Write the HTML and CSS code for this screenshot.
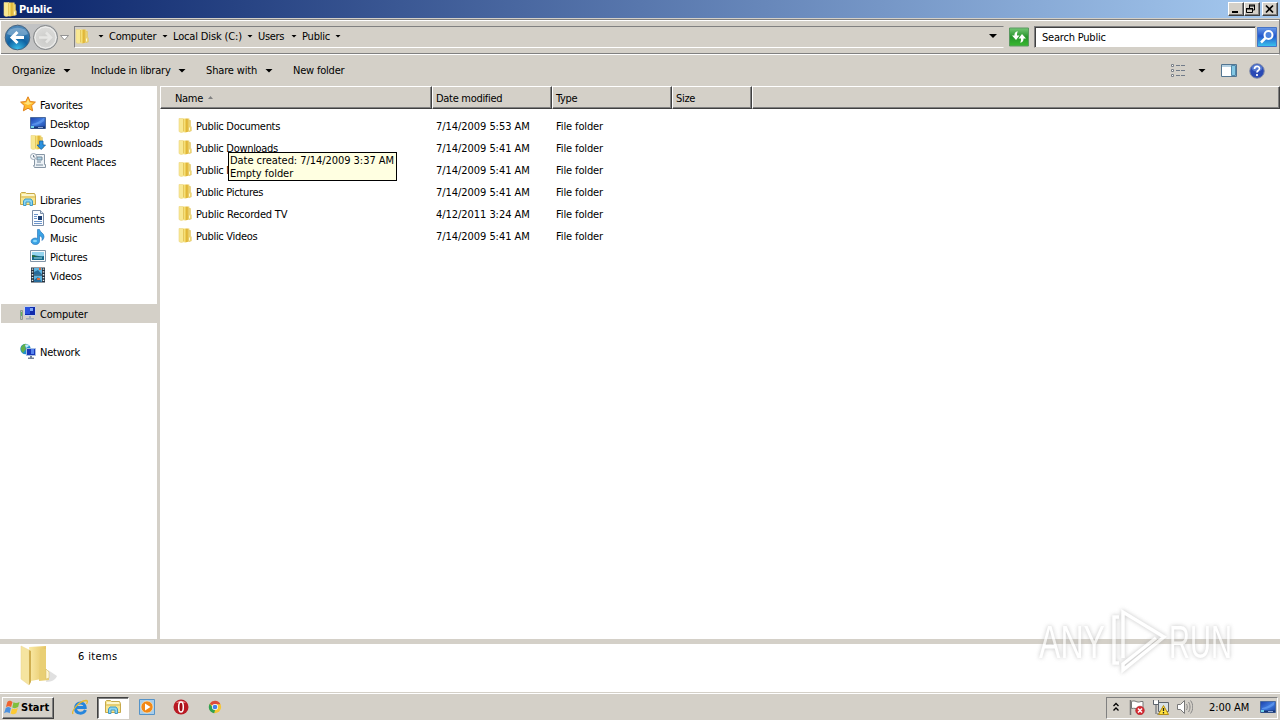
FILE: index.html
```html
<!DOCTYPE html>
<html lang="en">
<head>
<meta charset="utf-8">
<title>Public</title>
<link rel="stylesheet" href="styles.css">
</head>
<body>
<svg class="defs" aria-hidden="true">
  <defs>
    <linearGradient id="gold" x2="1"><stop offset="0" stop-color="#fff6b0"/><stop offset=".35" stop-color="#f0d35c"/><stop offset=".6" stop-color="#dcae2e"/><stop offset="1" stop-color="#f6e48a"/></linearGradient>
    <linearGradient id="goldBig" x2="1"><stop offset="0" stop-color="#faeaa6"/><stop offset="1" stop-color="#e5c565"/></linearGradient>
    <linearGradient id="blue" x2="1" y2="1"><stop offset="0" stop-color="#1c3fa8"/><stop offset=".5" stop-color="#3f7be0"/><stop offset="1" stop-color="#173f9c"/></linearGradient>
    <radialGradient id="back" cx=".5" cy="1" r=".9"><stop offset="0" stop-color="#3cc4f0"/><stop offset=".5" stop-color="#0f62a2"/><stop offset="1" stop-color="#4a86b8"/></radialGradient>
    <radialGradient id="fwd" cx=".5" cy=".6" r=".6"><stop offset="0" stop-color="#cacac8"/><stop offset="1" stop-color="#dededc"/></radialGradient>
    <linearGradient id="green" y2="1" x2="0"><stop offset="0" stop-color="#76c776"/><stop offset=".5" stop-color="#25952a"/><stop offset="1" stop-color="#38b92f"/></linearGradient>
    <linearGradient id="find" y2="1" x2="0"><stop offset="0" stop-color="#6b9be8"/><stop offset=".45" stop-color="#2458cc"/><stop offset="1" stop-color="#3ac5ee"/></linearGradient>
    <symbol id="folder" viewBox="0 0 16 16"><path d="M2 1.500h4.500v13.500L4 15.500l-2-1z" fill="#f8e893" stroke="#ecd581" stroke-width=".6"/><path d="M6 1.500h6.500v13L8 15.500l-2-.5z" fill="url(#gold)"/><path d="M12 3.500h1.500V9l.8 1v4l-2.300.5z" fill="#f0d978" stroke="#dcbc58" stroke-width=".5"/><path d="M6.500 2v12.500" stroke="#dfbe4c" stroke-width=".8"/><path d="M12.500 10.500v3" stroke="#fff8d0"/></symbol>
    <symbol id="star" viewBox="0 0 16 16"><path d="m8 .8 2.200 4.700 5.200.6-3.800 3.500 1 5.200L8 12.200l-4.600 2.600 1-5.200L.6 6.100l5.200-.6z" fill="#ffb92a" stroke="#e0811c"/><path d="m8 3 1.500 3.500 3.500.5-5 2-4.500-2 3-.5z" fill="#ffe27c"/></symbol>
    <symbol id="desktop" viewBox="0 0 16 16"><path d="M.5 2.500h15v11H.5z" fill="url(#blue)" stroke="#4b6a9d"/><path d="M1 11.500h14v2H1z" fill="#183571"/><path d="M1 12h3" stroke="#6fd0e8" stroke-width="2"/><path d="M8 12.500h5" stroke="#8ea7d5"/><path d="M2 9c5-1 8-3 12-6v3c-4 3-7 4-12 4z" fill="#6ba4f4" opacity=".6"/></symbol>
    <symbol id="downloads" viewBox="0 0 16 16"><use href="#folder" x="-1"/><path d="M9.500 7h3.500v4h2.500L11.200 15.500 7 11h2.500z" fill="#2b91df" stroke="#1765a8" stroke-width=".8"/></symbol>
    <symbol id="recent" viewBox="0 0 16 16"><path d="M4.500 1.500h10v10h1v3h-11l-1-2h1z" fill="#edf2f6" stroke="#8796a5"/><path d="M6 12h7M7 4h5v3H7zM7 9h4" stroke="#75899c" fill="#acd2e4"/><circle cx="3.500" cy="3.500" r="3" fill="#f5f7fa" stroke="#9aa7b5"/><path d="M3.500 2v2h1.500" stroke="#526577" fill="none" stroke-width=".8"/></symbol>
    <symbol id="libraries" viewBox="0 0 16 16"><path d="M.5 13.500v-11l1-1h4l1 1h8l1 2v9z" fill="#f7e58f" stroke="#c7a94b"/><path d="M2 4h12" stroke="#fffbe0" stroke-width="1.500"/><path d="M1 6h14" stroke="#d8b957"/><path d="M3.500 14.500V10l1.500-2h6l1.500 2v4.500h-2.500V11H6v3.500z" fill="#8bd5f3" stroke="#3e9ac6"/></symbol>
    <symbol id="document" viewBox="0 0 16 16"><path d="M2.500.5h8l3 3v12h-11z" fill="#fbfdff" stroke="#7b8ea8"/><path d="M10.500.5v3h3" fill="#d7e2ef" stroke="#7b8ea8"/><path d="M4 4.500h4M4 6.500h3M4 8.500h3M4 11.500h8M4 13.500h8" stroke="#6b94ca"/><path d="M8 6h4v4H8z" fill="#1d4175"/></symbol>
    <symbol id="music" viewBox="0 0 16 16"><path d="M7.500.5h2c.5 3 4.500 3.500 4.500 7 0 2-1 3-2 4 .5-3-.5-4-2.500-5V12a4.200 3.300 0 1 1-2-2.500z" fill="#3aa2e4" stroke="#1d6cb5" stroke-width=".6"/><ellipse cx="5" cy="12" rx="2" ry="1.300" fill="#89d7fa"/></symbol>
    <symbol id="picture" viewBox="0 0 16 16"><path d="M.5 2.500h15v11H.5z" fill="#f8fafb" stroke="#8295a8"/><path d="M2 4h12v8H2z" fill="#95d4ee"/><path d="M2 8c3-2 5 1 12 0v4H2z" fill="#186b8c"/><path d="M2 7c3 0 4 2 7 2H2z" fill="#246c3b"/><path d="M4 10h8" stroke="#a3e0e4"/></symbol>
    <symbol id="video" viewBox="0 0 16 16"><path d="M1 .5h14v15H1z" fill="#25313e"/><path d="M4 1h8v6.500H4zM4 8.500h8V15H4z" fill="#5eb5e2"/><path d="m4 5 4-2 4 4.500H4zM4 13l4-3 4 5H4z" fill="#276b9a"/><path d="M9 2h2M7 12h3" stroke="#d66d3c" stroke-width="2"/><path d="M2.500 1.500v14M13.500 1.500v14" stroke="#e8eef0" stroke-width="1.500" stroke-dasharray="1.300 1.500"/></symbol>
    <symbol id="computer" viewBox="0 0 16 16"><path d="M.5 5.500h2v9h-2z" fill="#bdc6bd" stroke="#8f9a92"/><path d="M1.500 7v4" stroke="#5fb95c"/><path d="M4.500 1.500h11v9h-11z" fill="#102bad" stroke="#cad5e8"/><path d="M5 2h5v7H5z" fill="#2952de"/><path d="M10 3h3v3h-3z" fill="#7ea5f4"/><path d="M9 11h2v2h3v1.500H6V13h3z" fill="#a0abb9"/></symbol>
    <symbol id="network" viewBox="0 0 16 16"><circle cx="5.500" cy="6" r="5.200" fill="#1f8ecb"/><path d="M2 3c2-3 5-2 5-1L5 4l1 2-3 4C1 8 0 5 2 3z" fill="#62b04a"/><path d="M5 2c2-1 4 0 4 1L6 5z" fill="#bceaf8"/><path d="M6.500 5.500h9v7h-9z" fill="#1736ba" stroke="#a8bee0"/><path d="M11 6h3v5h-3z" fill="#5684ed"/><path d="M10 13h2v1.500h2V16H8v-1.500h2z" fill="#718096"/></symbol>
    <symbol id="windows" viewBox="0 0 18 16"><path d="M3.500 2C6 0 7 1 9 2L7.500 7.500c-2-1-3-1.500-5.500 0z" fill="#ef632f"/><path d="M10 2.500c2 1 4 1 6.500-.5L15 7.500c-2.500 1.500-4 1.500-6.200.5z" fill="#7fbf3e"/><path d="M1.800 8.500c2.200-1.500 3.500-1 5.500 0L6 14c-2-1-3.500-1.500-6 0z" fill="#4c91df"/><path d="M8.500 9c2 1 4 1 6.200-.5L13 14c-2.500 1.500-4 1.500-6 .5z" fill="#fcc934"/></symbol>
  </defs>
</svg>

<header class="title-bar">
  <svg class="i16"><use href="#folder"/></svg><h1>Public</h1>
  <div class="window-buttons">
    <button aria-label="Minimize"><svg viewBox="0 0 12 10"><path d="M3 8h6" stroke="#000" stroke-width="2"/></svg></button>
    <button aria-label="Restore"><svg viewBox="0 0 12 10"><path d="M4 1h6M4 2h6M1.500 4.500h6M1.500 5h6M4.500 1v3M9.500 1v5H8M1.500 4v4.500h6V4" fill="none" stroke="#000"/></svg></button>
    <button class="close" aria-label="Close"><svg viewBox="0 0 12 10"><path d="m3 1.500 7 7m0-7-7 7" stroke="#000" stroke-width="1.700"/></svg></button>
  </div>
</header>

<nav class="nav-bar">
  <svg class="travel" viewBox="0 0 70 30">
    <path d="M17 2h28a13 13 0 0 1 0 26H17z" fill="#c2c3c4"/>
    <circle cx="17.500" cy="15.500" r="12.300" fill="url(#back)" stroke="#49647f"/>
    <path d="M7 12a11 9 0 0 1 21 0c-7 3-14 3-21 0z" fill="#a6c6df" opacity=".5"/>
    <path d="M24 15.500H12M17.500 10 12 15.500l5.500 5.500" fill="none" stroke="#fff" stroke-width="3"/>
    <circle cx="45.500" cy="15.500" r="12" fill="url(#fwd)" stroke="#808385"/>
    <circle cx="45.500" cy="15.500" r="10.500" fill="none" stroke="#f0f0ef"/>
    <path d="M39 15.500h12m-5-5 5 5-5 5" fill="none" stroke="#e6e6e4" stroke-width="2.500"/>
    <path d="M60.500 13.500h8L64.500 18z" fill="#fff" stroke="#8a8a8a" stroke-width=".9"/>
  </svg>
  <div class="address">
    <svg class="i16"><use href="#folder"/></svg>
    <i class="arrow first"></i><span class="crumb c1">Computer</span><i class="arrow"></i><span class="crumb c2">Local Disk (C:)</span><i class="arrow"></i><span class="crumb c3">Users</span><i class="arrow"></i><span class="crumb c4">Public</span><i class="arrow"></i>
    <i class="arrow large drop"></i>
  </div>
  <svg class="refresh" viewBox="0 0 20 19"><path d="M.5.500h19v18H.5z" fill="url(#green)" stroke="#5a9860"/><path d="M9 4C6 4 5.500 6 5.500 8H3l4 4.500L10.500 8H8c0-2 0-3 1-4zM11 15c3 0 3.500-2 3.500-4H17l-4-4.500L9.500 11H12c0 2 0 3-1 4z" fill="#fff"/></svg>
  <div class="search">Search Public</div>
  <svg class="find" viewBox="0 0 20 20"><path d="M.5.500h19v19H.5z" fill="url(#find)" stroke="#4773c4"/><circle cx="11.500" cy="8" r="4" fill="#4d83de" stroke="#fff" stroke-width="2"/><path d="m8.500 11-4.500 4.500" stroke="#fff" stroke-width="2.500"/></svg>
</nav>

<div class="toolbar">
  <span class="t1">Organize</span><i class="arrow large"></i>
  <span class="t2">Include in library</span><i class="arrow large"></i>
  <span class="t3">Share with</span><i class="arrow large"></i>
  <span class="t4">New folder</span>
  <div class="tools">
    <svg class="i16" viewBox="0 0 16 16"><path d="M1.500 1.500h2v2h-2zM1.500 6.500h2v2h-2zM1.500 11.500h2v2h-2z" fill="#fff" stroke="#7a8088"/><path d="M6 2.500h4m1 0h4M6 7.500h4m1 0h4M6 12.500h4m1 0h4" stroke="#717b89"/></svg>
    <i class="arrow large"></i>
    <svg class="i16" viewBox="0 0 16 16"><path d="M.5 1.500h15v12H.5z" fill="#fff" stroke="#527591"/><path d="M1 3h10" stroke="#b4d0e2" stroke-width="2"/><path d="M10.500 2.500h4v10h-4z" fill="#84c8e4" stroke="#5089ab"/></svg>
    <svg class="i16" viewBox="0 0 16 16"><circle cx="8" cy="8" r="7.300" fill="#2949b5" stroke="#8690ab"/><ellipse cx="8" cy="5" rx="5.500" ry="3.500" fill="#5478cf"/><path d="M5.500 6c0-3.500 5-3.500 5-.5C10.500 7.500 8 7.500 8 9.500M8 11v2" fill="none" stroke="#fff" stroke-width="1.700"/></svg>
  </div>
</div>

<main class="main">
  <aside class="sidebar">
    <div class="item"><svg class="i16"><use href="#star"/></svg><span>Favorites</span></div>
    <div class="item sub"><svg class="i16"><use href="#desktop"/></svg><span>Desktop</span></div>
    <div class="item sub"><svg class="i16"><use href="#downloads"/></svg><span>Downloads</span></div>
    <div class="item sub"><svg class="i16"><use href="#recent"/></svg><span>Recent Places</span></div>
    <div class="item gap"><svg class="i16"><use href="#libraries"/></svg><span>Libraries</span></div>
    <div class="item sub"><svg class="i16"><use href="#document"/></svg><span>Documents</span></div>
    <div class="item sub"><svg class="i16"><use href="#music"/></svg><span>Music</span></div>
    <div class="item sub"><svg class="i16"><use href="#picture"/></svg><span>Pictures</span></div>
    <div class="item sub"><svg class="i16"><use href="#video"/></svg><span>Videos</span></div>
    <div class="item gap selected"><svg class="i16"><use href="#computer"/></svg><span>Computer</span></div>
    <div class="item gap"><svg class="i16"><use href="#network"/></svg><span>Network</span></div>
  </aside>
  <section class="files">
    <div class="grid head"><span class="name">Name <i class="sort"></i></span><span>Date modified</span><span>Type</span><span>Size</span><span></span></div>
    <div class="rows">
      <div class="grid row"><span class="name"><svg class="i16"><use href="#folder"/></svg>Public Documents</span><span class="date">7/14/2009 5:53 AM</span><span class="type">File folder</span></div>
      <div class="grid row"><span class="name"><svg class="i16"><use href="#folder"/></svg>Public Downloads</span><span class="date">7/14/2009 5:41 AM</span><span class="type">File folder</span></div>
      <div class="grid row"><span class="name"><svg class="i16"><use href="#folder"/></svg>Public Music</span><span class="date">7/14/2009 5:41 AM</span><span class="type">File folder</span></div>
      <div class="grid row"><span class="name"><svg class="i16"><use href="#folder"/></svg>Public Pictures</span><span class="date">7/14/2009 5:41 AM</span><span class="type">File folder</span></div>
      <div class="grid row"><span class="name wide"><svg class="i16"><use href="#folder"/></svg>Public Recorded TV</span><span class="date">4/12/2011 3:24 AM</span><span class="type">File folder</span></div>
      <div class="grid row"><span class="name"><svg class="i16"><use href="#folder"/></svg>Public Videos</span><span class="date">7/14/2009 5:41 AM</span><span class="type">File folder</span></div>
    </div>
  </section>
</main>

<section class="details">
  <svg class="big-folder" viewBox="0 0 42 44"><path d="M27 38c6 0 10-3 11-6l-9-6z" fill="#ccc" opacity=".6"/><path d="m10 3 17-1v32l-15 3z" fill="url(#goldBig)"/><path d="M21 5h6v20l3 3v8l-10 1z" fill="#e9cf74"/><path d="M27 25l3 3v6l-3 1z" fill="#fff8d6" stroke="#d5ba67" stroke-width=".5"/><path d="M2 2 10 6l1 33-1 2-8-6z" fill="#f5e4a0" stroke="#ead58f" stroke-width=".5"/><path d="m10 6 2 1v31l-2 3z" fill="#cfae50"/></svg>
  <span>6 items</span>
</section>

<footer class="taskbar">
  <button class="start"><svg class="flag"><use href="#windows"/></svg>Start</button>
  <div class="task"><svg class="i16" viewBox="0 0 16 16"><path d="M13.500 11c-2 4.500-10 4.500-10-2s9.500-6.500 9.700-.5H5" fill="none" stroke="#2585dc" stroke-width="3"/><path d="M1 15c-2-3 6-13 13-13.500 2 0 1.500 2 .5 3.500" fill="none" stroke="#e8b92e" stroke-width="1.300"/></svg></div>
  <div class="task active"><svg class="i16"><use href="#libraries"/></svg></div>
  <div class="task"><svg class="i16" viewBox="0 0 16 16"><path d="M.5.500h15v15H.5z" fill="#a8cdea" stroke="#5593c8"/><circle cx="8" cy="8" r="6" fill="#f28816" stroke="#fff1cd" stroke-width=".6"/><path d="m6 4.500 5.500 3.500L6 11.500z" fill="#fff"/></svg></div>
  <div class="task"><svg class="i16" viewBox="0 0 16 16"><circle cx="8" cy="8" r="7.500" fill="#b91923"/><path d="M3 4a6 5 0 0 1 10 0z" fill="#e77878"/><ellipse cx="8" cy="8" rx="2.300" ry="5" fill="#a00c15" stroke="#fff" stroke-width="1.500"/></svg></div>
  <div class="task"><svg class="chrome" viewBox="0 0 16 16"><circle cx="8" cy="8" r="7" fill="#f6c634"/><path d="M8 8 2 4.300a7 7 0 0 1 12.200.5H8z" fill="#dd4a3b"/><path d="M2 4.300 8 12l-1 3A7 7 0 0 1 2 4.300z" fill="#2da154"/><circle cx="8" cy="8" r="3.500" fill="#fff"/><circle cx="8" cy="8" r="2.700" fill="#4380e8"/></svg></div>
  <div class="tray">
    <svg class="chev" viewBox="0 0 8 10"><path d="m1.500 4 2.500-2.500L6.500 4m-5 4.500L4 6l2.500 2.500" fill="none" stroke="#000" stroke-width="1.300"/></svg>
    <svg class="i16" viewBox="0 0 16 16"><path d="M1.500 1v15" stroke="#777" stroke-width="1.500"/><path d="M2.500 2.500c4-2 5 2 9.500 0h2v7c-4 2-6-1-11.500 0z" fill="#fff" stroke="#777"/><circle cx="11" cy="11.500" r="4.300" fill="#d72931" stroke="#a71921" stroke-width=".6"/><path d="m9 9.500 4 4m0-4-4 4" stroke="#fff" stroke-width="1.500"/></svg>
    <svg class="i16" viewBox="0 0 16 16"><path d="M5.500 3.500h10v9h-10z" fill="#d8e1e5" stroke="#5e656d"/><path d="M1 1.500h4V5H1z" fill="#fff"/><path d="M.5 1v4.500h5V1M3 5.500V15M4 15h5" fill="none" stroke="#5e656d"/><path d="m10.500 6.500 5 9h-10z" fill="#ffe23d" stroke="#b48c14"/><path d="M10.500 9v3m0 1v1.500" stroke="#222" stroke-width="1.300"/></svg>
    <svg class="i16" viewBox="0 0 16 16"><path d="M.5 5.500h3l4-4v13l-4-4h-3z" fill="#fff" stroke="#777"/><path d="M9.500 5c1 2 1 4 0 6M11.500 3c2 3 2 7 0 10M13.500 1.500c3 4 3 9 0 13" fill="none" stroke="#888"/></svg>
    <span>2:00 AM</span>
    <svg class="i16"><use href="#desktop"/></svg>
  </div>
</footer>

<div class="tooltip">Date created: 7/14/2009 3:37 AM<br>Empty folder</div>

<svg class="watermark" viewBox="0 0 220 80">
  <g class="mark">
    <text x="9" y="58" textLength="66" lengthAdjust="spacingAndGlyphs">ANY</text>
    <text x="139" y="58" textLength="63" lengthAdjust="spacingAndGlyphs">RUN</text>
    <path d="M89 17h-5v46h5M93 58V12l41 25-41 33v-6l33-26" fill="none" stroke="#fff" stroke-width="3.500"/>
  </g>
</svg>
</body>
</html>
```

FILE: styles.css
```css
* { box-sizing: border-box; }
body { margin: 0; width: 1280px; height: 720px; overflow: hidden; display: flex; flex-direction: column; background: #d4d0c8; color: #000; font: 11px/13px "DejaVu Sans Condensed", "DejaVu Sans", sans-serif; font-stretch: condensed; letter-spacing: -.3px; white-space: nowrap; }
svg { display: block; flex: none; }
button { font: inherit; color: inherit; padding: 0; }
.defs { position: absolute; width: 0; height: 0; }
.i16 { width: 16px; height: 16px; }

.title-bar { height: 18px; flex: none; display: flex; align-items: center; padding: 0 2px; background: linear-gradient(90deg, #0a246a, #a6caf0); color: #fff; }
.title-bar h1 { margin: 0 0 0 1px; font-size: 11px; font-weight: bold; letter-spacing: -.2px; }
.window-buttons { display: flex; margin-left: auto; }
.window-buttons button { width: 16px; height: 14px; background: #d4d0c8; border: 1px solid; border-color: #fff #404040 #404040 #fff; box-shadow: inset -1px -1px #808080; }
.window-buttons .close { margin-left: 2px; }
.window-buttons svg { width: 12px; height: 10px; }

.nav-bar { height: 36px; flex: none; margin-top: 1px; display: flex; align-items: center; border-top: 1px solid #808080; border-bottom: 1px solid #fff; border-right: 1px solid #808080; box-shadow: inset 1px 1px #fff, inset 0 -1px #808080; }
.travel { width: 70px; height: 30px; }
.address { width: 930px; height: 22px; margin-left: 4px; display: flex; align-items: center; padding-bottom: 2px; border: 1px solid; border-color: #808080 transparent #fff #808080; }
.address .i16 { margin-left: -1px; }
.arrow { width: 6px; height: 3px; flex: none; background: #000; clip-path: polygon(0 0, 100% 0, 50% 100%); }
.arrow.large { width: 8px; height: 4px; }
.address .first { margin-left: 8px; }
.crumb { padding-left: 5px; }
.c1 { width: 58px; letter-spacing: -.25px; } .c2 { width: 79px; letter-spacing: -.15px; } .c3 { width: 38px; } .c4 { width: 38px; letter-spacing: -.2px; }
.address .drop { margin-left: auto; margin-right: 6px; }
.refresh { width: 20px; height: 20px; margin-left: 5px; }
.search { width: 222px; height: 22px; margin-left: 5px; padding: 4px 7px; background: #fff; border: 1px solid; border-color: #808080 #d4d0c8 #d4d0c8 #808080; box-shadow: inset 1px 1px #404040; letter-spacing: -.2px; }
.find { width: 20px; height: 20px; margin-left: 1px; }

.toolbar { height: 31px; flex: none; display: flex; align-items: center; padding-left: 12px; }
.t1 { width: 51px; letter-spacing: -.15px; }
.t2 { width: 87px; margin-left: 20px; letter-spacing: -.2px; }
.t3 { width: 59px; margin-left: 20px; letter-spacing: -.15px; }
.t4 { margin-left: 20px; letter-spacing: -.2px; }
.tools { display: flex; align-items: center; margin-left: auto; padding-right: 15px; }
.tools .arrow { margin: 0 15px 0 12px; }
.tools .i16 + .i16 { margin-left: 12px; }

.main { height: 553px; flex: none; display: flex; }
.sidebar { width: 157px; padding: 9px 0 0 1px; background: #fff; }
.item { height: 19px; display: flex; align-items: center; gap: 4px; padding-left: 19px; letter-spacing: -.2px; }
.item .i16 { margin-top: -1px; }
.item span { padding-top: 1px; }
.sub { padding-left: 29px; }
.gap { margin-top: 19px; }
.selected { background: #d4d0c8; }
.files { width: 1120px; margin-left: 3px; background: #fff; }
.grid { display: grid; grid-template-columns: 272px 120px 120px 80px 1fr; align-items: center; }
.head { height: 23px; background: #d4d0c8; }
.head > span { height: 23px; padding: 5px 0 0 3px; border-top: 1px solid #fff; border-left: 1px solid #fff; border-right: 1px solid #404040; border-bottom: 1px solid #404040; box-shadow: inset -1px -1px #808080; }
.head .name { padding-left: 14px; display: flex; gap: 5px; }
.sort { width: 5px; height: 3px; margin-top: 4px; background: #808080; clip-path: polygon(50% 0, 100% 100%, 0 100%); }
.rows { padding-top: 6px; }
.row { height: 22px; }
.row > span { padding-left: 4px; }
.row .name { display: flex; align-items: center; gap: 3px; padding-left: 17px; }
.row .name .i16 { margin-top: -2px; }
.row .wide { letter-spacing: -.2px; }
.date { letter-spacing: -.05px; }
.type { letter-spacing: -.12px; }

.details { height: 48px; flex: none; margin-top: 5px; display: flex; background: #fff; }
.big-folder { width: 42px; height: 44px; margin-left: 19px; }
.details span { margin: 6px 0 0 17px; letter-spacing: .35px; }

.taskbar { height: 28px; flex: none; display: flex; align-items: center; border-top: 1px solid #d4d0c8; box-shadow: inset 0 1px #fff; padding: 2px 2px 0; }
.start { width: 52px; height: 22px; display: flex; align-items: center; font-weight: bold; letter-spacing: 0; padding-left: 1px; background: #d4d0c8; border: 1px solid; border-color: #fff #404040 #404040 #fff; box-shadow: inset -1px -1px #808080; }
.flag { width: 17px; height: 15px; }
.task { width: 34px; height: 22px; display: flex; align-items: center; justify-content: center; padding-bottom: 1px; }
.start + .task { margin-left: 9px; }
.task.active { width: 32px; margin-right: 1px; background: #fff; border: 1px solid; border-color: #404040 #fff #fff #404040; box-shadow: inset 1px 1px #808080; }
.task .chrome { width: 14px; height: 14px; }
.tray { width: 172px; height: 22px; display: flex; align-items: center; margin-left: auto; padding: 0 0 1px 5px; border: 1px solid; border-color: #808080 #fff #fff #808080; }
.chev { width: 8px; height: 10px; margin-right: 9px; }
.tray .i16 + .i16 { margin-left: 8px; }
.tray span { width: 41px; margin: 1px 10px 0 16px; letter-spacing: -.05px; }

.tooltip { position: absolute; left: 228px; top: 152px; width: 169px; height: 29px; padding: 1px; background: #ffffe1; border: 1px solid #000; letter-spacing: -.05px; }
.watermark { position: absolute; left: 1030px; top: 600px; width: 220px; height: 80px; opacity: .7; }
.mark { filter: drop-shadow(0 0 2px #aaa); }
.mark text { font: 46px "Liberation Sans Narrow", "Liberation Sans", sans-serif; fill: #fff; letter-spacing: 0; }
```
